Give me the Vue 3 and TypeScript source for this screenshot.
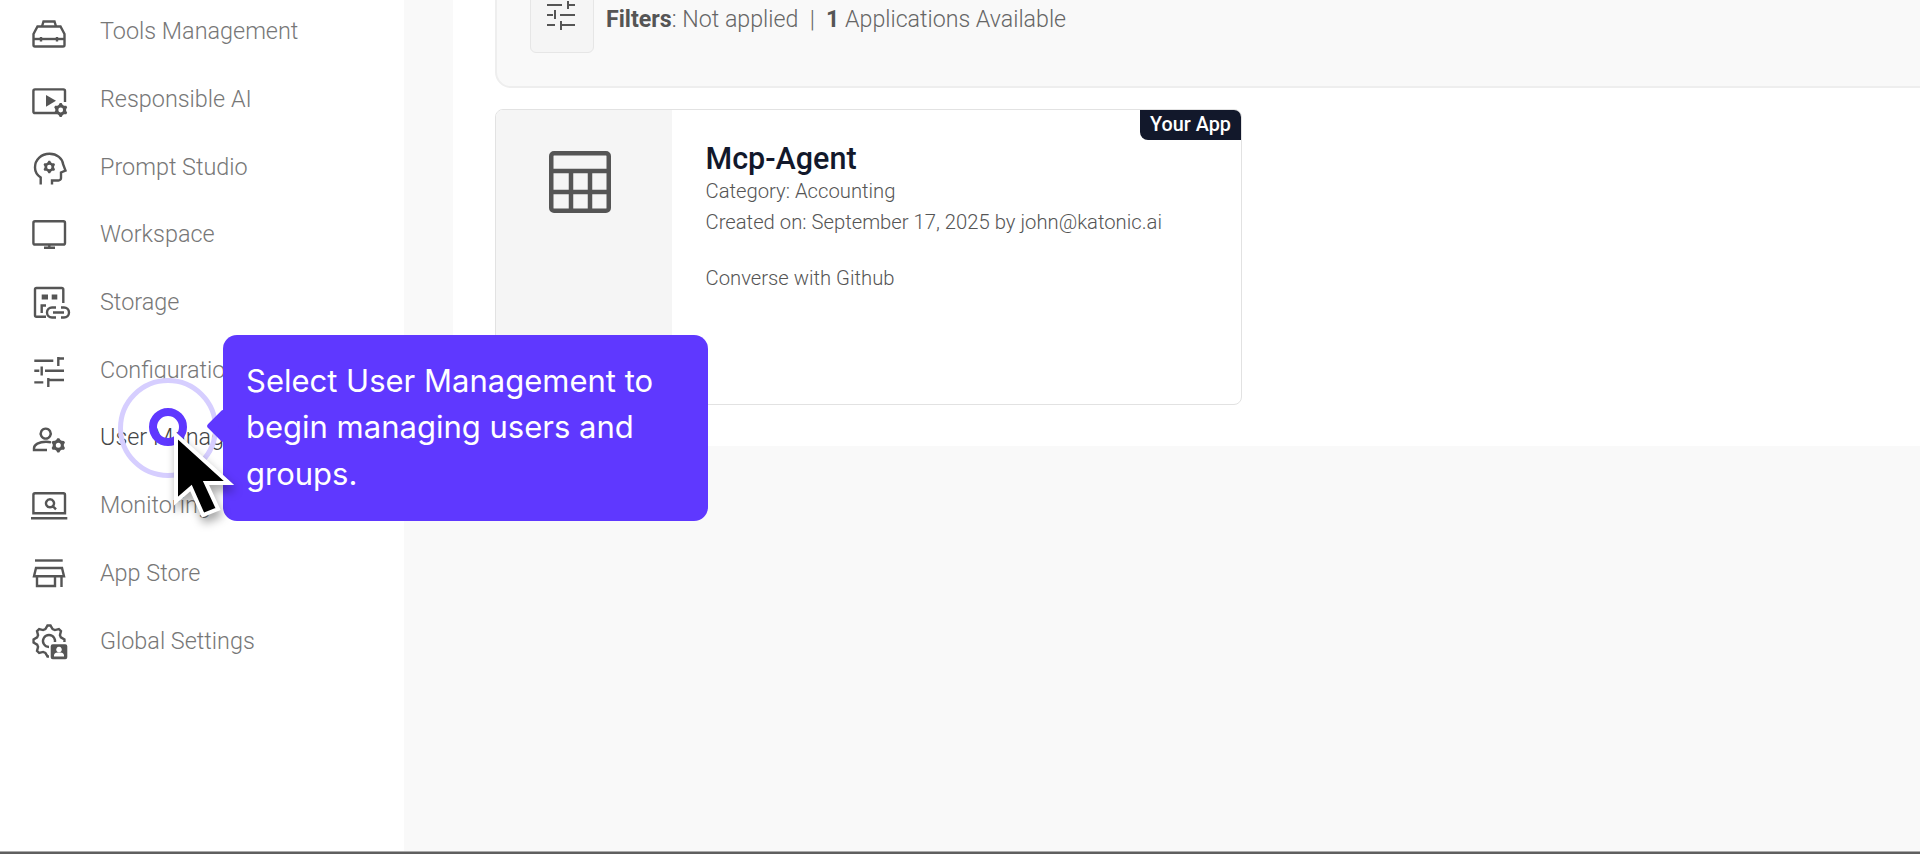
<script setup lang="ts">
interface NavItem { label: string; active?: boolean; paths: string[]; fills?: string[]; cover?: string }

function gear(cx: number, cy: number, r: number, hole: number, teeth = 6, inner = 0.78): string {
  const pts: string[] = []
  const n = teeth * 4
  for (let i = 0; i < n; i++) {
    const a = (i / n) * Math.PI * 2 - Math.PI / 2 - Math.PI / n
    const rad = i % 4 < 2 ? r : r * inner
    pts.push(`${(cx + rad * Math.cos(a)).toFixed(2)} ${(cy + rad * Math.sin(a)).toFixed(2)}`)
  }
  let d = `M${pts.join('L')}z`
  if (hole > 0) {
    d += `M${cx - hole} ${cy}a${hole} ${hole} 0 1 0 ${hole * 2} 0a${hole} ${hole} 0 1 0 ${-hole * 2} 0z`
  }
  return d
}

const items: NavItem[] = [
  {
    label: 'Tools Management',
    paths: [
      'M5 34.500h28a1.500 1.500 0 0 0 1.500-1.500V22l-4-7.500H7.500l-4 7.500v11A1.500 1.500 0 0 0 5 34.500z',
      'M12 14.500l1.500-5h11l1.500 5',
      'M3.500 27h31',
      'M11 25v4.500M27 25v4.500'
    ]
  },
  {
    label: 'Responsible AI',
    paths: ['M25 33H5a1.600 1.600 0 0 1-1.600-1.600V11A1.600 1.600 0 0 1 5 9.400h28.400A1.600 1.600 0 0 1 35 11v11'],
    fills: ['M16 15l10 5.800-10 6z', gear(30.7, 30, 7, 2.4)]
  },
  {
    label: 'Prompt Studio',
    paths: ['M10.700 36.500v-7C7 27 5 23.500 5 19.500 5 11.500 11.500 5.800 19.500 5.800 27 5.800 32.500 10.500 33.200 16.500L35.500 22.500 31 24.500V30a2.500 2.500 0 0 1-2.500 2.500H22v4'],
    fills: [gear(19.3, 19, 6.2, 2.2)]
  },
  {
    label: 'Workspace',
    paths: [
      'M5 6.300h28.400A1.600 1.600 0 0 1 35 7.900v20a1.600 1.600 0 0 1-1.600 1.600H5a1.600 1.600 0 0 1-1.600-1.600v-20A1.600 1.600 0 0 1 5 6.300z',
      'M19.300 29.500v3M14 32.800h11'
    ]
  },
  {
    label: 'Storage',
    paths: [
      'M16 33.700H6.500A1.500 1.500 0 0 1 5 32.200V6.500A1.500 1.500 0 0 1 6.500 5h25.300a1.500 1.500 0 0 1 1.500 1.500V20',
      'M11.700 30v-7.500H16',
      'M26 24.500h-4a5 5 0 0 0 0 10h4M31 24.500h3a5 5 0 0 1 0 10h-3M23 29.500h11'
    ],
    fills: ['M11.700 11.500h6.300v5h-6.300zM21.700 11.500h5.600v5h-5.600z']
  },
  {
    label: 'Configuration',
    paths: [
      'M4.300 9.700h19M28.300 6v9M28.300 7.500H34',
      'M4.300 19.700h5M11.700 15.500v9M15 19.700h19',
      'M4.300 31.400h9M18.300 27v9M18.300 29H34'
    ]
  },
  {
    label: 'User Management',
    active: true,
    paths: [
      'M15.700 10.600a5 5 0 1 0 .01 0z',
      'M21 24.300c-1.500-.4-3-.6-5-.6-7 0-12 3-12 6.500V32h13'
    ],
    fills: [gear(28.3, 27.3, 7.2, 2.5)]
  },
  {
    label: 'Monitoring',
    paths: [
      'M5 7.300h28.400A1.600 1.600 0 0 1 35 8.900v18.400H3.400V8.900A1.600 1.600 0 0 1 5 7.300z',
      'M1 32.300h36.300',
      'M20 13.300a4 4 0 1 0 .01 0zM23 20.300l3 3'
    ]
  },
  {
    label: 'App Store',
    paths: [
      'M5 6.500h27.700',
      'M6 14h26l2 8.300H4z',
      'M7 22.300V32h18v-9.700M31.500 22.300V33'
    ]
  },
  {
    label: 'Global Settings',
    paths: [gear(19, 19, 15.5, 0, 8, 0.8), 'M19 13a6 6 0 1 0 .01 0z'],
    cover: 'M19 20h21v20H19z',
    fills: ['M22.700 22.300h12.600a2 2 0 0 1 2 2v11a2 2 0 0 1-2 2H22.700a2 2 0 0 1-2-2v-11a2 2 0 0 1 2-2zM29 24.800a2.800 2.800 0 1 0 .01 0zM24 34.500h10v-1.300c0-1.800-2.200-2.900-5-2.900s-5 1.100-5 2.900z']
  }
]
</script>

<template>
  <div class="page">
    <div class="content">
      <aside class="sidebar">
        <nav class="nav">
          <a v-for="item in items" :key="item.label" class="nav-item" :class="{ active: item.active }">
            <svg class="nav-icon" viewBox="0 0 38 38" width="38" height="38">
              <path v-for="(d, i) in item.paths" :key="i" :d="d" fill="none" stroke="#555" stroke-width="2.400" />
              <path v-if="item.cover" :d="item.cover" fill="#fff" />
              <path v-for="(d, i) in item.fills || []" :key="'f' + i" :d="d" fill="#555" fill-rule="evenodd" />
            </svg>
            <span class="nav-label">{{ item.label }}</span>
          </a>
        </nav>
      </aside>
      <main class="main">
        <section class="panel">
          <div class="filter-card">
            <button class="filter-btn" type="button" aria-label="Filters">
              <svg viewBox="0 0 32 32" width="32" height="32">
                <path d="M1 5h15M22 1v8M22 5h7M1 15h6M9 10v9M14 15h15M1 25h8M15 21v9M15 25h14" fill="none" stroke="#555" stroke-width="2" />
              </svg>
            </button>
            <p class="filter-text"><b>Filters</b>: Not applied &nbsp;|&nbsp; <b>1</b> Applications Available</p>
          </div>
          <article class="app-card">
            <div class="app-thumb">
              <svg viewBox="0 0 62 62" width="62" height="62">
                <path d="M5 2.250h52A2.750 2.750 0 0 1 59.750 5v52a2.750 2.750 0 0 1-2.750 2.750H5A2.750 2.750 0 0 1 2.250 57V5A2.750 2.750 0 0 1 5 2.250zM2.250 20h57.500M2.250 41h57.500M22 20v39.750M41 20v39.750" fill="none" stroke="#555" stroke-width="4.500" />
              </svg>
            </div>
            <div class="app-body">
              <h2 class="app-title">Mcp-Agent</h2>
              <p class="app-line">Category: Accounting</p>
              <p class="app-line">Created on: September 17, 2025 by john@katonic.ai</p>
              <p class="app-desc">Converse with Github</p>
            </div>
            <span class="app-tag">Your App</span>
          </article>
        </section>
      </main>
    </div>
    <div class="bottom-bar"></div>

    <div class="pulse">
      <span class="pulse-dot"></span>
    </div>
    <div class="tooltip">Select User Management to begin managing users and groups.</div>
    <svg class="cursor" viewBox="0 0 62 90" width="62" height="90">
      <path d="M3 3v66l15-13 12 27 15-6-12-26h23z" fill="#000" stroke="#fff" stroke-width="4" stroke-linejoin="miter" />
    </svg>
  </div>
</template>

<style>
html, body { margin: 0; background: #fff; }
</style>

<style scoped>
.page {
  position: relative;
  height: 854px;
  overflow: hidden;
  display: flex;
  flex-direction: column;
  font-family: Roboto, "Liberation Sans", sans-serif;
}
.content { flex: 1; display: flex; min-height: 0; }
.bottom-bar { height: 3px; background: #5f5f5f; border-top: 1px solid #aaa; box-sizing: border-box; }
.sidebar { width: 404px; flex: none; background: #fff; }
.nav { display: flex; flex-direction: column; margin-top: -2.500px; padding-left: 30px; }
.nav-item { height: 67.700px; display: flex; align-items: center; gap: 32px; color: #777; flex: none; }
.nav-item.active { color: #444; }
.nav-icon { flex: none; overflow: visible; }
.nav-label { font-size: 23.400px; font-weight: 300; white-space: nowrap; }
.main { flex: 1; background: #f9f9f9; padding-left: 49px; min-width: 0; }
.panel { height: 446px; background: #fff; padding-left: 42px; overflow: hidden; }
.filter-card {
  height: 130px;
  margin-top: -42px;
  margin-right: -20px;
  box-sizing: border-box;
  background: #f9f9f9;
  border: 2px solid #eee;
  border-radius: 16px;
  padding: 14px 0 0 33px;
  display: flex;
  gap: 12px;
}
.filter-btn {
  width: 64px;
  height: 79px;
  box-sizing: border-box;
  background: #f5f5f5;
  border: 1px solid #e6e6e6;
  border-radius: 6px;
  display: flex;
  align-items: flex-end;
  justify-content: center;
  padding: 0 0 20px;
}
.filter-text { margin: 31px 0 0; font-size: 23.200px; font-weight: 300; color: #666; }
.filter-text b { font-weight: 700; color: #555; }
.app-card {
  position: relative;
  margin-top: 21px;
  width: 747px;
  height: 296px;
  box-sizing: border-box;
  border: 1px solid #e2e2e2;
  border-radius: 8px;
  overflow: hidden;
  display: flex;
  background: #fff;
}
.app-thumb { width: 176px; flex: none; background: #f5f5f5; display: flex; justify-content: flex-start; align-items: flex-start; padding: 41px 0 0 53px; box-sizing: border-box; }
.app-body { padding: 31px 0 0 33.500px; }
.app-title { margin: 0 0 3px; font-size: 30.500px; line-height: 36px; font-weight: 500; color: #12182b; }
.app-line { margin: 0 0 8px; font-size: 20.250px; line-height: 23px; font-weight: 300; color: #555; }
.app-desc { margin: 33px 0 0; font-size: 20.250px; line-height: 23px; font-weight: 300; color: #555; }
.app-tag {
  position: absolute;
  top: 0;
  right: 0;
  width: 101px;
  height: 30px;
  background: #12182b;
  color: #fff;
  font-size: 19.800px;
  font-weight: 500;
  line-height: 30px;
  text-align: center;
  border-bottom-left-radius: 8px;
}
.pulse {
  position: absolute;
  left: 118px;
  top: 378px;
  width: 100px;
  height: 100px;
  box-sizing: border-box;
  border: 5px solid #d6ceff;
  border-radius: 50%;
  display: flex;
  align-items: center;
  justify-content: center;
}
.pulse-dot {
  width: 38px;
  height: 38px;
  margin-bottom: 3px;
  box-sizing: border-box;
  border: 8px solid #5f38ff;
  border-radius: 50%;
}
.tooltip {
  position: absolute;
  left: 223px;
  top: 334.500px;
  width: 485px;
  height: 186px;
  box-sizing: border-box;
  padding: 23px 23px;
  background: #5f38ff;
  color: #fff;
  border-radius: 14px;
  font-family: Inter, "Noto Sans", sans-serif;
  font-size: 31px;
  line-height: 46.500px;
}
.tooltip::before {
  content: "";
  position: absolute;
  left: -12px;
  top: 79px;
  width: 24px;
  height: 24px;
  background: #5f38ff;
  transform: rotate(45deg);
  border-radius: 3px;
}
.cursor {
  position: absolute;
  left: 173px;
  top: 432px;
  filter: drop-shadow(2px 6px 5px rgba(0, 0, 0, 0.35));
}
</style>
